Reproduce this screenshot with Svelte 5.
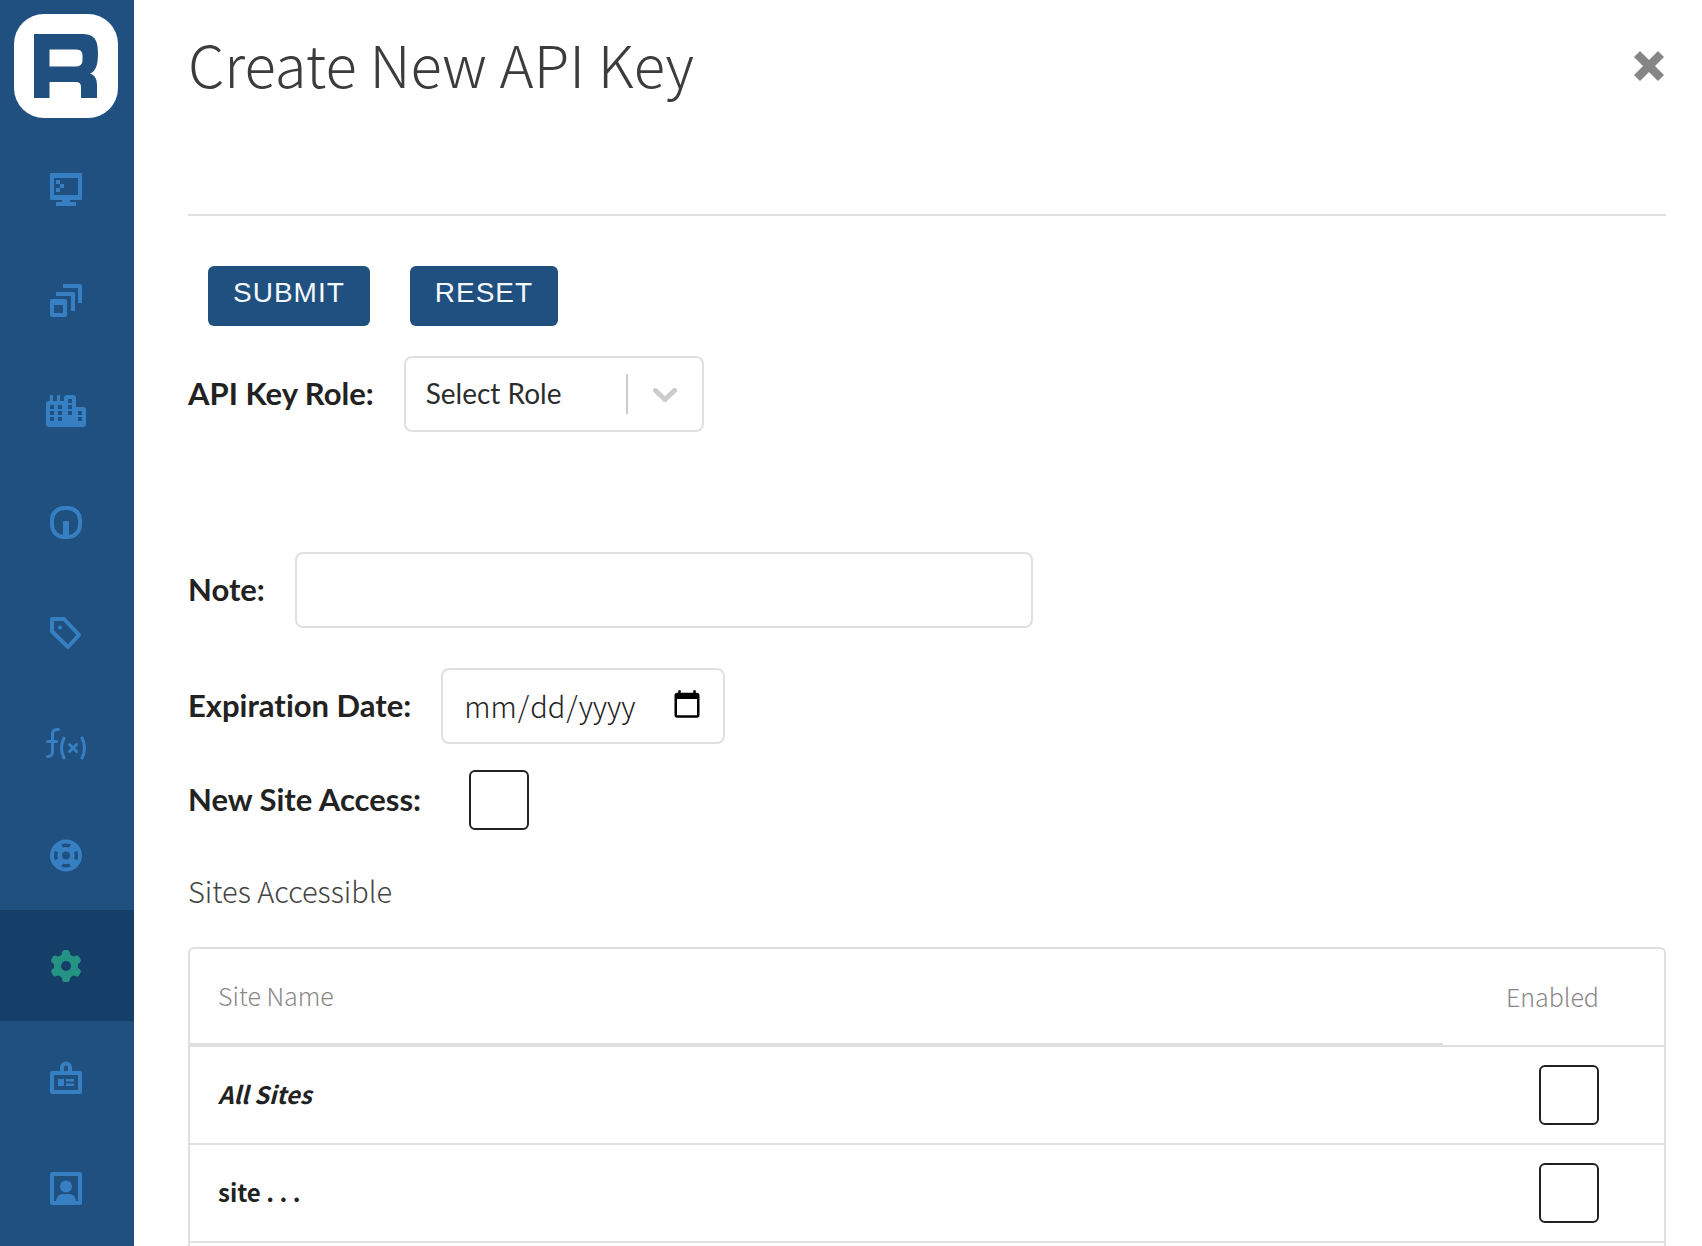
<script lang="ts">
  interface Site {
    id: string;
    name: string;
    all?: boolean;
    enabled: boolean;
  }

  const navItems = ['console', 'stacks', 'sites', 'nodes', 'tags', 'functions', 'support', 'settings', 'license', 'account'];
  const active = 'settings';

  const roles = ['Select Role'];

  let role = $state(roles[0]);
  let note = $state('');
  let expiration = $state('');
  let newSiteAccess = $state(false);
  let sites = $state<Site[]>([
    { id: 'all', name: 'All Sites', all: true, enabled: false },
    { id: 'site', name: 'site . . .', enabled: false },
  ]);

  function reset() {
    role = roles[0];
    note = '';
    expiration = '';
    newSiteAccess = false;
    sites.forEach((s) => (s.enabled = false));
  }
</script>

{#snippet icon(name: string)}
  <svg class="icon" viewBox="0 0 40 40" aria-hidden="true">
    {#if name === 'console'}
      <path fill-rule="evenodd" d="M5 4h30q1 0 1 1v25q0 1-1 1H24v2h6v4H10v-4h6v-2H5q-1 0-1-1V5q0-1 1-1zM8 9v17h24V9z" />
      <path d="M10 11h4v4h-4zM14 15h4v4h-4zM10 19h4v4h-4z" />
    {:else if name === 'stacks'}
      <path fill-rule="evenodd" d="M6 19h13q2 0 2 2v14q0 2-2 2H6q-2 0-2-2V21q0-2 2-2zM8 25v8h9v-8z" />
      <path d="M10 12h17q2 0 2 2v17h-4V16H10zM17 4h17q2 0 2 2v17h-4V8H17z" />
    {:else if name === 'sites'}
      <path
        fill-rule="evenodd"
        d="M3 10h1V5q0-1 1-1h1q1 0 1 1v5h4V5q0-1 1-1h1q1 0 1 1v5h4V7q0-3 3-3h6q3 0 3 3v9h7q3 0 3 3v14q0 3-3 3H3q-3 0-3-3V13q0-3 3-3z
        M4 14v4h4v-4zM4 20v4h4v-4zM4 26v4h4v-4zM12 14v4h4v-4zM12 20v4h4v-4zM12 26v4h4v-4z
        M22 8v4h4V8zM22 14v4h4v-4zM22 20v4h4v-4zM32 20v4h4v-4zM32 26v4h4v-4z"
      />
    {:else if name === 'nodes'}
      <rect class="line" x="6" y="6" width="28" height="29" rx="12" />
      <path d="M17 20q0-1 1-1h4q1 0 1 1v16h-6z" />
    {:else if name === 'tags'}
      <path class="line" d="M6 6h12l15 16-11 12L6 18.500z" />
      <circle cx="14" cy="14.500" r="2" />
    {:else if name === 'functions'}
      <path class="line thin" d="M12.500 5.500h-1.500q-4.500 0-4.500 5v17q0 5-4.500 5h-.500M1.500 17.500h9M18 14q-5 10 0 20M36 14q5 10 0 20M23.500 20.500l7 7M30.500 20.500l-7 7" />
    {:else if name === 'support'}
      <path
        fill-rule="evenodd"
        d="M20 4.500a16 16 0 1 0 0 32 16 16 0 1 0 0-32zM20 16.500a4 4 0 1 1 0 8 4 4 0 1 1 0-8z
        M15 9.500q5-2 10 0l-2 3q-3-1-6 0zM15 31.500q5 2 10 0l-2-3q-3 1-6 0z
        M9 15.500q-2 5 0 10l3-2q-1-3 0-6zM31 15.500q2 5 0 10l-3-2q1-3 0-6z"
      />
    {:else if name === 'settings'}
      <circle class="hub" cx="20" cy="20" r="8.500" />
      {#each [0, 60, 120, 180, 240, 300] as angle}
        <path transform="rotate({angle} 20 20)" d="M14.500 10.500q1.500-1 1.500-4 .500-2.500 2.500-2.500h3q2 0 2.500 2.500 0 3 1.500 4l-2 2h-7z" />
      {/each}
    {:else if name === 'license'}
      <rect class="line" x="6" y="16" width="28" height="19" />
      <path class="line" d="M16 16v-5.500a4 4 0 0 1 8 0V16" />
      <path d="M12 22h6v7h-6zM20 22h8v2.500h-8zM20 26.500h8V29h-8z" />
    {:else}
      <rect class="line" x="6" y="6" width="28" height="29" />
      <circle cx="20" cy="18.500" r="6" />
      <path d="M10 33q1-7 7-7h6q6 0 7 7z" />
    {/if}
  </svg>
{/snippet}

<div class="app">
  <aside class="sidebar">
    <a class="logo" href="#home" aria-label="Home">
      <svg viewBox="0 0 104 104" aria-hidden="true">
        <rect width="104" height="104" rx="30" fill="#fff" />
        <path
          fill="#20507f"
          fill-rule="evenodd"
          d="M20 20h47c13 0 17 5 17 19 0 12-2 18-8 20.500 5 2 7 5 7 12V84H67V73q0-5-5-5H35.500v16H20zM35.500 35.500V52.500H61q7.500 0 7.500-6v-5q0-6-6-6z"
        />
      </svg>
    </a>
    <nav>
      {#each navItems as item (item)}
        <a class="nav-item" class:active={item === active} href="#{item}" aria-label={item}>
          {@render icon(item)}
        </a>
      {/each}
    </nav>
  </aside>

  <main>
    <header>
      <h1>Create New API Key</h1>
      <button class="close" type="button" aria-label="Close">
        <svg viewBox="0 0 30 30" aria-hidden="true">
          <path d="M6 0l9 9 9-9 6 6-9 9 9 9-6 6-9-9-9 9-6-6 9-9-9-9z" />
        </svg>
      </button>
    </header>

    <form onsubmit={(e) => e.preventDefault()}>
      <div class="actions">
        <button class="btn" type="submit">SUBMIT</button>
        <button class="btn" type="button" onclick={reset}>RESET</button>
      </div>

      <div class="field role-field">
        <label for="role">API Key Role:</label>
        <div class="select">
          <select id="role" bind:value={role}>
            {#each roles as r}
              <option value={r}>{r}</option>
            {/each}
          </select>
          <span class="indicator">
            <svg viewBox="0 0 24 14" aria-hidden="true"><path d="M2.500 2.500L12 11.500l9.500-9" /></svg>
          </span>
        </div>
      </div>

      <div class="field note-field">
        <label for="note">Note:</label>
        <input id="note" class="box" type="text" bind:value={note} />
      </div>

      <div class="field date-field">
        <label for="expiration">Expiration Date:</label>
        <input id="expiration" class="box" type="date" bind:value={expiration} />
      </div>

      <div class="field access-field">
        <label for="new-site">New Site Access:</label>
        <input id="new-site" type="checkbox" bind:checked={newSiteAccess} />
      </div>
    </form>

    <h2>Sites Accessible</h2>

    <div class="table-wrap">
      <table>
        <thead>
          <tr>
            <th class="name">Site Name</th>
            <th class="enabled">Enabled</th>
          </tr>
        </thead>
        <tbody>
          {#each sites as site (site.id)}
            <tr>
              <td class="name" class:all={site.all}><label for="site-{site.id}">{site.name}</label></td>
              <td class="enabled"><input id="site-{site.id}" type="checkbox" bind:checked={site.enabled} /></td>
            </tr>
          {/each}
        </tbody>
      </table>
    </div>
  </main>
</div>

<style>
  :global(body) { margin: 0; background: #fff; }

  .app {
    display: flex;
    height: 100vh;
    color: #222;
    font-family: "Noto Sans CJK JP", "Noto Sans", sans-serif;
    font-weight: 300;
  }
  .app * { box-sizing: border-box; }

  /* Sidebar */
  .sidebar {
    flex: 0 0 134px;
    background: #20507f;
    overflow: hidden;
  }
  .logo { display: block; width: 104px; margin: 14px 14px 15px; }
  .logo svg { display: block; width: 104px; height: 104px; }
  .nav-item {
    display: flex;
    justify-content: center;
    height: 111px;
    padding: 36px 2px 0 0;
    color: #377fc3;
  }
  .nav-item.active { background: #153e68; color: #249383; }
  .icon { width: 40px; height: 40px; fill: currentColor; }
  .icon .line {
    fill: none;
    stroke: currentColor;
    stroke-width: 4;
    stroke-linejoin: round;
  }
  .icon .thin { stroke-width: 3; stroke-linecap: round; }
  .icon .hub { fill: none; stroke: currentColor; stroke-width: 7; }

  /* Page */
  main {
    flex: 1;
    display: flex;
    flex-direction: column;
    min-width: 0;
    padding: 0 36px 0 54px;
    overflow: auto;
    scrollbar-width: none;
  }
  header {
    display: flex;
    justify-content: space-between;
    align-items: flex-start;
    height: 216px;
    flex-shrink: 0;
    padding-top: 22px;
    border-bottom: 2px solid #e0e0e0;
  }
  h1 { margin: 0; font-size: 58px; line-height: 82px; font-weight: 300; color: #3c3c3c; }
  .close {
    width: 34px;
    height: 88px;
    padding: 0 2px;
    border: 0;
    background: none;
    cursor: pointer;
  }
  .close svg { display: block; width: 30px; fill: #868686; }

  .actions { display: flex; gap: 40px; padding: 50px 20px 30px; }
  .btn {
    height: 60px;
    padding: 0 25px 6px;
    border: 0;
    border-radius: 6px;
    background: #20507f;
    color: #f5f9fc;
    font: 28px "Liberation Sans", Arial, sans-serif;
    letter-spacing: 1px;
    cursor: pointer;
  }

  .field { display: flex; align-items: center; gap: 30px; }
  .field label {
    padding-bottom: 2px;
    font: 700 31px/40px Lato, sans-serif;
    font-variant-ligatures: none;
    white-space: nowrap;
  }
  .role-field { margin-bottom: 120px; }
  .note-field { margin-bottom: 40px; }
  .date-field { margin-bottom: 26px; }
  .access-field { gap: 48px; }

  .box, .select {
    height: 76px;
    border: 2px solid #e0e0e0;
    border-radius: 8px;
    background: #fff;
  }
  .select { position: relative; width: 300px; }
  select {
    width: 100%;
    height: 100%;
    padding: 0 80px 2px 20px;
    border: 0;
    appearance: none;
    background: none;
    color: #2c2c2c;
    font: 28px Lato, sans-serif;
  }
  .indicator {
    position: absolute;
    top: 16px;
    right: 0;
    display: flex;
    align-items: center;
    justify-content: center;
    width: 76px;
    height: 40px;
    padding-top: 2px;
    border-left: 2px solid #ccc;
    pointer-events: none;
  }
  .indicator svg { width: 24px; fill: none; stroke: #ccc; stroke-width: 5; stroke-linecap: round; }

  .box { padding: 0 20px 2px; color: #222; font: 300 29px "Noto Sans CJK JP", sans-serif; }
  .box::-webkit-calendar-picker-indicator { width: 32px; height: 32px; padding: 0; }
  .note-field .box { width: 738px; }
  .date-field .box { width: 284px; }

  input[type="checkbox"] {
    display: block;
    width: 60px;
    height: 60px;
    margin: 0;
    appearance: none;
    border: 2px solid #222;
    border-radius: 6px;
    background: #fff;
  }
  input[type="checkbox"]:checked { background: #20507f; }

  h2 { margin: 36px 0 33px; font-size: 29px; line-height: 48px; font-weight: 300; color: #444; }

  /* Table */
  .table-wrap {
    flex: 1 0 auto;
    border: 2px solid #e0e0e0;
    border-bottom: 0;
    border-radius: 6px 6px 0 0;
  }
  table { width: 100%; border-spacing: 0; font-size: 25px; line-height: 40px; }
  th, td { height: 98px; padding: 0; border-bottom: 2px solid #e0e0e0; text-align: left; }
  th { padding-bottom: 2px; font-weight: 300; color: #888; }
  th.name { border-bottom-width: 4px; }
  .name { padding-left: 28px; }
  td.name { padding-bottom: 2px; font-size: 24px; font-weight: 700; }
  .all { font-style: italic; }
  .enabled { width: 221px; padding-right: 65px; text-align: right; }
  td.enabled input { margin-left: auto; }
</style>
